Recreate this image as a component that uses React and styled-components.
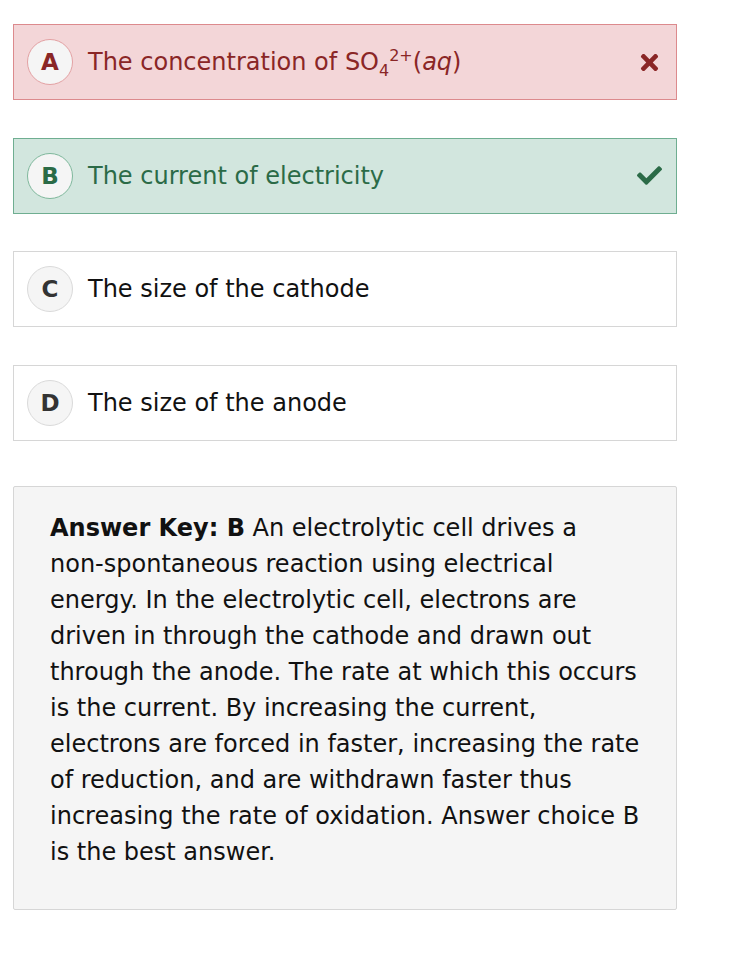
import styled, { createGlobalStyle } from "styled-components";
import { FaTimes, FaCheck } from "react-icons/fa";

const Global = createGlobalStyle`
  body {
    margin: 0;
    background: #fff;
    font-family: "DejaVu Sans", Verdana, sans-serif;
  }
`;

const PALETTE = {
  wrong: { bg: "#f3d6d8", border: "#dc8a8d", text: "#8a2626", circle: "#e3a1a3" },
  right: { bg: "#d2e6de", border: "#6fae91", text: "#2b6b47", circle: "#7fb89c" },
  plain: { bg: "#fff", border: "#d6d6d6", text: "#111", circle: "#dadada" },
};

const options = [
  { letter: "A", state: "wrong", text: <>The concentration of SO<sub>4</sub><sup>2+</sup>(<i>aq</i>)</> },
  { letter: "B", state: "right", text: "The current of electricity" },
  { letter: "C", state: "plain", text: "The size of the cathode" },
  { letter: "D", state: "plain", text: "The size of the anode" },
];

function App() {
  return (
    <>
      <Global />
      <S.Page>
        <S.List>
          {options.map((o) => (
            <S.Option key={o.letter} $state={o.state}>
              <S.Letter $state={o.state}>{o.letter}</S.Letter>
              <S.Text $state={o.state}>{o.text}</S.Text>
              {o.state === "wrong" && (
                <S.Mark $state={o.state}>
                  <FaTimes />
                </S.Mark>
              )}
              {o.state === "right" && (
                <S.Mark $state={o.state}>
                  <FaCheck />
                </S.Mark>
              )}
            </S.Option>
          ))}
        </S.List>
        <S.Explain>
          <b>Answer Key: B</b> An electrolytic cell drives a non‑spontaneous
          reaction using electrical energy. In the electrolytic cell, electrons
          are driven in through the cathode and drawn out through the anode. The
          rate at which this occurs is the current. By increasing the current,
          electrons are forced in faster, increasing the rate of reduction, and
          are withdrawn faster thus increasing the rate of oxidation. Answer
          choice B is the best answer.
        </S.Explain>
      </S.Page>
    </>
  );
}
export default App;

const Page = styled.div`
  width: 664px;
  padding: 24px 0 0 13px;
`;

const List = styled.ul`
  margin: 0;
  padding: 0;
  list-style: none;
  display: flex;
  flex-direction: column;
  gap: 37.5px;
`;

const Option = styled.li`
  height: 76px;
  box-sizing: border-box;
  display: flex;
  align-items: center;
  padding: 0 14px 0 13px;
  background: ${({ $state }) => PALETTE[$state].bg};
  border: 1px solid ${({ $state }) => PALETTE[$state].border};
`;

const Letter = styled.div`
  width: 46px;
  height: 46px;
  box-sizing: border-box;
  border-radius: 50%;
  background: #f5f5f5;
  border: 1px solid ${({ $state }) => PALETTE[$state].circle};
  display: flex;
  align-items: center;
  justify-content: center;
  font-weight: bold;
  font-size: 23px;
  color: ${({ $state }) => ($state === "plain" ? "#333" : PALETTE[$state].text)};
  flex-shrink: 0;
`;

const Text = styled.div`
  flex: 1;
  margin-left: 15px;
  font-size: 24px;
  color: ${({ $state }) => PALETTE[$state].text};
  & sub,
  & sup {
    font-size: 16px;
    line-height: 0;
  }
`;

const Mark = styled.div`
  color: ${({ $state }) => PALETTE[$state].text};
  font-size: 25px;
  display: flex;
  align-items: center;
`;

const Explain = styled.div`
  margin-top: 45px;
  min-height: 424px;
  box-sizing: border-box;
  padding: 23px 36px 36px 36px;
  background: #f5f5f5;
  border: 1px solid #d6d6d6;
  border-radius: 2px;
  font-size: 24px;
  line-height: 36px;
  color: #111;
`;

const S = { Page, List, Option, Letter, Text, Mark, Explain };
